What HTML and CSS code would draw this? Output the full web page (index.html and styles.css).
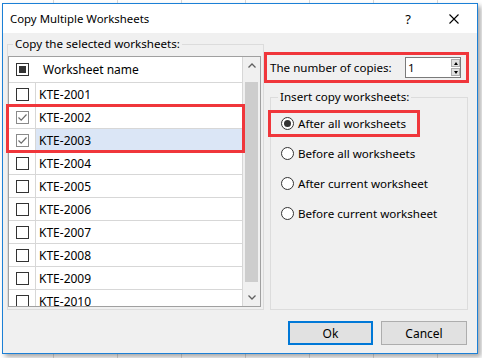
FILE: index.html
```html
<!DOCTYPE html>
<html>
<head>
<meta charset="utf-8">
<link rel="stylesheet" href="styles.css">
</head>
<body>
<div class="dialog">
  <div class="titlebar">
    <span class="title">Copy Multiple Worksheets</span>
    <span class="help">?</span>
    <span class="close"><svg width="10" height="10" viewBox="0 0 10 10"><path d="M0.5 0.5L9.5 9.5M9.5 0.5L0.5 9.5" stroke="#000" stroke-width="1.1" fill="none"/></svg></span>
  </div>
  <div class="main">
    <fieldset class="group sheets">
      <legend>Copy the selected worksheets:</legend>
      <div class="list">
        <div class="grid">
          <div class="row head"><div class="chk"><span class="box mixed"></span></div><div class="name">Worksheet name</div></div>
          <div class="row"><div class="chk"><span class="box"></span></div><div class="name">KTE-2001</div></div>
          <div class="row"><div class="chk"><span class="box checked"><svg width="11" height="11" viewBox="0 0 11 11"><path d="M1.5 5.5L4.2 8.2L9.5 2.5" stroke="#6b6b6b" stroke-width="1.2" fill="none"/></svg></span></div><div class="name">KTE-2002</div></div>
          <div class="row"><div class="chk"><span class="box checked"><svg width="11" height="11" viewBox="0 0 11 11"><path d="M1.5 5.5L4.2 8.2L9.5 2.5" stroke="#6b6b6b" stroke-width="1.2" fill="none"/></svg></span></div><div class="name current">KTE-2003</div></div>
          <div class="row"><div class="chk"><span class="box"></span></div><div class="name">KTE-2004</div></div>
          <div class="row"><div class="chk"><span class="box"></span></div><div class="name">KTE-2005</div></div>
          <div class="row"><div class="chk"><span class="box"></span></div><div class="name">KTE-2006</div></div>
          <div class="row"><div class="chk"><span class="box"></span></div><div class="name">KTE-2007</div></div>
          <div class="row"><div class="chk"><span class="box"></span></div><div class="name">KTE-2008</div></div>
          <div class="row"><div class="chk"><span class="box"></span></div><div class="name">KTE-2009</div></div>
          <div class="row"><div class="chk"><span class="box"></span></div><div class="name">KTE-2010</div></div>
        </div>
        <div class="scrollbar">
          <div class="sb-btn"><svg width="8" height="5" viewBox="0 0 8 5"><path d="M0.5 4.5L4 1L7.5 4.5" stroke="#606060" stroke-width="1.3" fill="none"/></svg></div>
          <div class="thumb"></div>
          <div class="sb-space"></div>
          <div class="sb-btn"><svg width="8" height="5" viewBox="0 0 8 5"><path d="M0.5 0.5L4 4L7.5 0.5" stroke="#606060" stroke-width="1.3" fill="none"/></svg></div>
        </div>
        <div class="mark"></div>
      </div>
    </fieldset>
    <div class="side">
      <div class="copies">
        <span>The number of copies:</span>
        <div class="spin">
          <span class="val">1</span>
          <div class="arrows">
            <span class="arr"><span class="tri up"></span></span>
            <span class="arr"><span class="tri down"></span></span>
          </div>
        </div>
      </div>
      <fieldset class="group insert">
        <legend>Insert copy worksheets:</legend>
        <div class="opt first"><span class="radio on"></span><span>After all worksheets</span></div>
        <div class="opt"><span class="radio"></span><span>Before all worksheets</span></div>
        <div class="opt"><span class="radio"></span><span>After current worksheet</span></div>
        <div class="opt"><span class="radio"></span><span>Before current worksheet</span></div>
      </fieldset>
    </div>
  </div>
  <div class="buttons">
    <button class="btn default">Ok</button>
    <button class="btn cancel">Cancel</button>
  </div>
</div>
</body>
</html>
```

FILE: styles.css
```css
html, body {
  margin: 0;
  height: 358px;
  overflow: hidden;
}
body {
  padding: 3px 0 0 2px;
  box-sizing: border-box;
  background: #fff repeating-linear-gradient(90deg, transparent 0 53px, #d9d9d9 53px 54px, transparent 54px 64px);
  font-family: "Noto Sans", "Open Sans", sans-serif;
  font-size: 11.6px;
  color: #000;
}
.dialog {
  width: 476px;
  height: 351px;
  box-sizing: border-box;
  border: 1px solid #1c80d6;
  background: #f0f0f0;
  display: flex;
  flex-direction: column;
  box-shadow: 3px 3px 5px rgba(0, 0, 0, 0.35);
}
.titlebar {
  height: 29px;
  flex: none;
  background: #fff;
  display: flex;
  align-items: center;
  padding-left: 7px;
}
.title { flex: 1; font-size: 11.4px; }
.help {
  width: 12px;
  text-align: center;
  margin-right: 35px;
  font-size: 13px;
}
.close {
  width: 10px;
  height: 10px;
  display: flex;
  margin-right: 18px;
}
.main {
  display: flex;
  margin-top: 4px;
}
fieldset.group {
  margin: 0;
  padding: 0;
  border: 1px solid #dcdcdc;
  min-width: 0;
  box-sizing: border-box;
}
legend {
  padding: 0 2px;
  margin-left: 5px;
  line-height: 14px;
  font-size: 11.6px;
}
.sheets {
  margin-left: 4px !important;
  width: 257px;
  padding: 0 2px 2px 0 !important;
  flex: none;
}
.list {
  margin-top: 5px;
  height: 251px;
  box-sizing: border-box;
  border: 1px solid #a0a0a0;
  background: #fff;
  display: flex;
  position: relative;
}
.grid {
  flex: 1;
  overflow: hidden;
  font-size: 12px;
}
.row {
  display: flex;
  height: 23px;
  box-sizing: border-box;
  border-bottom: 1px solid #d7d7d7;
}
.row.head { height: 26px; }
.chk {
  width: 27px;
  flex: none;
  box-sizing: border-box;
  border-right: 1px solid #d7d7d7;
  display: flex;
  align-items: center;
  padding-left: 7px;
}
.head .chk { border-right-color: transparent; }
.name {
  flex: 1;
  border-right: 1px solid #d7d7d7;
  padding-left: 3px;
  display: flex;
  align-items: center;
}
.head .name { padding-left: 7px; }
.name.current { background: #dbe6f6; }
.box {
  width: 13px;
  height: 13px;
  box-sizing: border-box;
  border: 1px solid #333;
  background: #fff;
  display: flex;
  align-items: center;
  justify-content: center;
}
.box.checked { border-color: #8a8a8a; }
.box.mixed::after {
  content: "";
  width: 7px;
  height: 7px;
  background: #333;
}
.scrollbar {
  width: 17px;
  flex: none;
  background: #f0f0f0;
  display: flex;
  flex-direction: column;
}
.sb-btn {
  height: 17px;
  display: flex;
  align-items: center;
  justify-content: center;
}
.thumb {
  margin: 8px 2px 0;
  height: 200px;
  background: #cdcdcd;
}
.sb-space { flex: 1; }
.mark {
  position: absolute;
  left: -3px;
  top: 47px;
  width: 239px;
  height: 49px;
  box-sizing: border-box;
  border: 3px solid #f0363b;
}
.side {
  display: flex;
  flex-direction: column;
  width: 205px;
  flex: none;
}
.copies {
  margin-top: 15px;
  height: 31px;
  box-sizing: border-box;
  border: 3px solid #f0363b;
  display: flex;
  align-items: center;
  padding-left: 3px;
}
.spin {
  display: flex;
  width: 56px;
  height: 21px;
  box-sizing: border-box;
  border: 1px solid #7a7a7a;
  background: #fff;
  margin-left: auto;
  margin-right: 5px;
}
.val {
  flex: 1;
  padding-left: 2px;
  line-height: 19px;
}
.arrows {
  width: 9px;
  display: flex;
  flex-direction: column;
  gap: 1px;
  padding: 1px 0;
}
.arr {
  height: 8px;
  box-sizing: border-box;
  border: 1px solid #adadad;
  background: #e1e1e1;
  display: flex;
  align-items: center;
  justify-content: center;
}
.tri {
  width: 0;
  height: 0;
  border-left: 2.5px solid transparent;
  border-right: 2.5px solid transparent;
}
.tri.up { border-bottom: 3px solid #000; }
.tri.down { border-top: 3px solid #000; }
.insert {
  margin-top: 7px !important;
  margin-left: 6px !important;
  width: 198px;
  flex: 1;
}
.insert legend { margin-left: 7px; }
.opt {
  display: flex;
  align-items: center;
  height: 27px;
  box-sizing: border-box;
  border: 3px solid transparent;
  margin-left: -3px;
  margin-top: 3px;
  padding-left: 10px;
}
.opt.first {
  margin-top: 6px;
  width: 152px;
  border-color: #f0363b;
}
.radio {
  width: 13px;
  height: 13px;
  flex: none;
  box-sizing: border-box;
  border: 1px solid #333;
  border-radius: 50%;
  background: #fff;
  margin-right: 4px;
  display: flex;
  align-items: center;
  justify-content: center;
}
.radio.on::after {
  content: "";
  width: 7px;
  height: 7px;
  border-radius: 50%;
  background: #333;
}
.buttons {
  display: flex;
  justify-content: flex-end;
  gap: 8px;
  margin-top: 11px;
  padding-right: 10px;
}
.btn {
  width: 85px;
  height: 24px;
  box-sizing: border-box;
  border: 1px solid #adadad;
  background: #e1e1e1;
  font: inherit;
  font-size: 12px;
  color: #000;
  padding: 0;
}
.btn.cancel { width: 86px; }
.btn.default { border: 2px solid #0078d7; }
```
